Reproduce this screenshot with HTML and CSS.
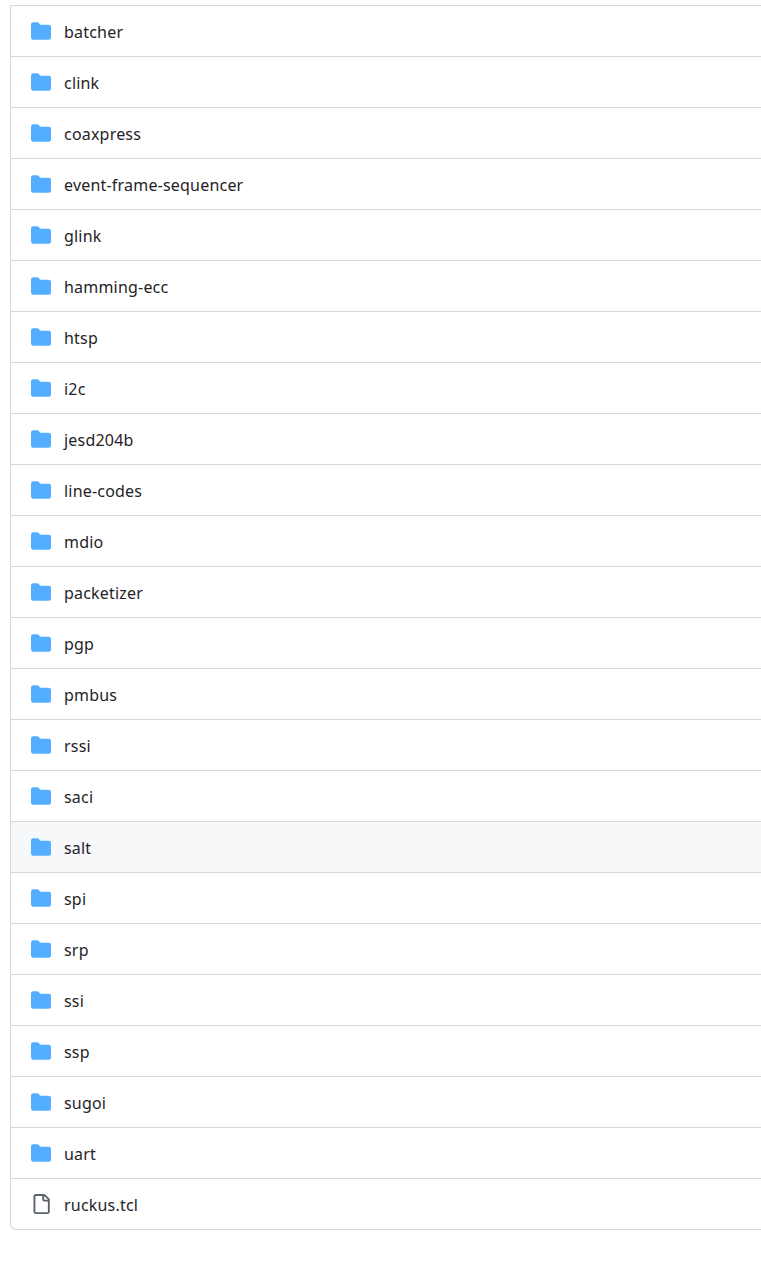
FILE: index.html
```html
<!DOCTYPE html>
<html lang="en">
<head>
<meta charset="utf-8">
<title>Files</title>
<link rel="stylesheet" href="styles.css">
</head>
<body>
<svg class="defs" width="0" height="0" aria-hidden="true">
<symbol id="dir" viewBox="0 0 16 16"><path d="M1.75 1A1.75 1.75 0 0 0 0 2.75v10.5C0 14.216.784 15 1.75 15h12.5A1.75 1.75 0 0 0 16 13.25v-8.5A1.75 1.75 0 0 0 14.25 3H7.5a.25.25 0 0 1-.2-.1l-.9-1.2C6.07 1.26 5.55 1 5 1H1.75Z"/></symbol>
<symbol id="file" viewBox="0 0 16 16"><path d="M2 1.75C2 .784 2.784 0 3.75 0h6.586c.464 0 .909.184 1.237.513l2.914 2.914c.329.328.513.773.513 1.237v9.586A1.75 1.75 0 0 1 13.25 16h-9.5A1.75 1.75 0 0 1 2 14.25Zm1.75-.25a.25.25 0 0 0-.25.25v12.5c0 .138.112.25.25.25h9.5a.25.25 0 0 0 .25-.25V6h-2.75A1.75 1.75 0 0 1 9 4.25V1.5Zm6.75.062V4.25c0 .138.112.25.25.25h2.688l-.011-.013-2.914-2.914-.013-.011Z"/></symbol>
</svg>
<ul class="files">
<li class="row"><svg class="icon dir"><use href="#dir"/></svg><span class="name">batcher</span></li>
<li class="row"><svg class="icon dir"><use href="#dir"/></svg><span class="name">clink</span></li>
<li class="row"><svg class="icon dir"><use href="#dir"/></svg><span class="name">coaxpress</span></li>
<li class="row"><svg class="icon dir"><use href="#dir"/></svg><span class="name">event-frame-sequencer</span></li>
<li class="row"><svg class="icon dir"><use href="#dir"/></svg><span class="name">glink</span></li>
<li class="row"><svg class="icon dir"><use href="#dir"/></svg><span class="name">hamming-ecc</span></li>
<li class="row"><svg class="icon dir"><use href="#dir"/></svg><span class="name">htsp</span></li>
<li class="row"><svg class="icon dir"><use href="#dir"/></svg><span class="name">i2c</span></li>
<li class="row"><svg class="icon dir"><use href="#dir"/></svg><span class="name">jesd204b</span></li>
<li class="row"><svg class="icon dir"><use href="#dir"/></svg><span class="name">line-codes</span></li>
<li class="row"><svg class="icon dir"><use href="#dir"/></svg><span class="name">mdio</span></li>
<li class="row"><svg class="icon dir"><use href="#dir"/></svg><span class="name">packetizer</span></li>
<li class="row"><svg class="icon dir"><use href="#dir"/></svg><span class="name">pgp</span></li>
<li class="row"><svg class="icon dir"><use href="#dir"/></svg><span class="name">pmbus</span></li>
<li class="row"><svg class="icon dir"><use href="#dir"/></svg><span class="name">rssi</span></li>
<li class="row"><svg class="icon dir"><use href="#dir"/></svg><span class="name">saci</span></li>
<li class="row hover"><svg class="icon dir"><use href="#dir"/></svg><span class="name">salt</span></li>
<li class="row"><svg class="icon dir"><use href="#dir"/></svg><span class="name">spi</span></li>
<li class="row"><svg class="icon dir"><use href="#dir"/></svg><span class="name">srp</span></li>
<li class="row"><svg class="icon dir"><use href="#dir"/></svg><span class="name">ssi</span></li>
<li class="row"><svg class="icon dir"><use href="#dir"/></svg><span class="name">ssp</span></li>
<li class="row"><svg class="icon dir"><use href="#dir"/></svg><span class="name">sugoi</span></li>
<li class="row"><svg class="icon dir"><use href="#dir"/></svg><span class="name">uart</span></li>
<li class="row"><svg class="icon doc"><use href="#file"/></svg><span class="name">ruckus.tcl</span></li>
</ul>
</body>
</html>
```
FILE: styles.css
```css
html, body {
  margin: 0;
  padding: 0;
  background: #fff;
  overflow: hidden;
  height: 1266px;
}
.defs {
  display: block;
  height: 0;
}
.files {
  list-style: none;
  margin: 0 -20px 0 10px;
  padding: 5px 0 0;
  font-family: "Noto Sans", "Open Sans", sans-serif;
  font-size: 16px;
  letter-spacing: 0.2px;
  color: #1f2328;
}
.row {
  display: flex;
  align-items: center;
  gap: 13px;
  height: 50px;
  padding-left: 20px;
  border-top: 1px solid #d1d9e0;
  border-left: 1px solid #d1d9e0;
}
.row:last-child {
  border-bottom: 1px solid #d1d9e0;
  border-bottom-left-radius: 6px;
}
.hover {
  background: #f6f8fa;
}
.name {
  padding-top: 2px;
}
.icon {
  width: 20px;
  height: 20px;
  flex: none;
  fill: currentColor;
}
.dir {
  color: #54aeff;
}
.doc {
  color: #59636e;
}
```
